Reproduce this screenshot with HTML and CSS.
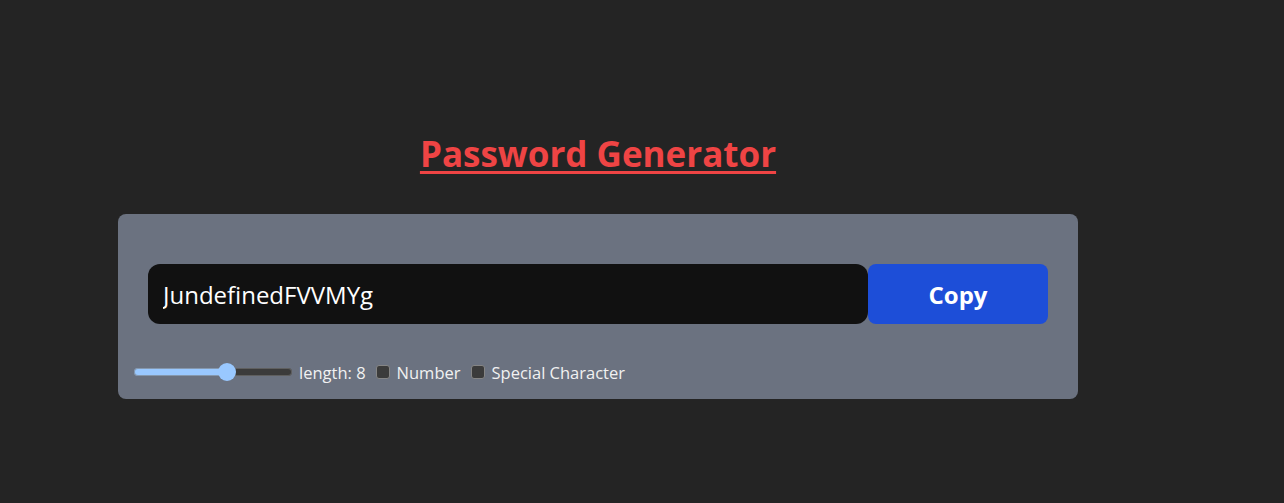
FILE: index.html
```html
<!DOCTYPE html>
<html lang="en">
<head>
<meta charset="utf-8">
<title>Password Generator</title>
<link rel="stylesheet" href="styles.css">
</head>
<body>
<main class="page">
  <h1 class="title">Password Generator</h1>
  <section class="card">
    <div class="field-row">
      <input class="password" type="text" value="JundefinedFVVMYg" readonly>
      <button class="copy" type="button">Copy</button>
    </div>
    <div class="options">
      <input class="range" type="range" min="5" max="10" value="8" style="--fill: 59.5%">
      <label class="opt">length: 8</label>
      <label class="opt"><input type="checkbox" class="check">Number</label>
      <label class="opt"><input type="checkbox" class="check">Special Character</label>
    </div>
  </section>
</main>
</body>
</html>
```

FILE: styles.css
```css
html { color-scheme: dark; }
body {
  margin: 0;
  background: #242424;
  font-family: "Open Sans", "Noto Sans", sans-serif;
  color: rgba(255,255,255,0.87);
}
.page {
  width: 960px;
  margin: 0 auto 0 118px;
  padding-top: 130px;
}
.title {
  margin: 0 0 36px;
  text-align: center;
  color: #ef4444;
  font-size: 35px;
  font-weight: 700;
  line-height: 48px;
  text-decoration: underline;
  text-underline-offset: 4px;
  text-decoration-thickness: 3px;
}
.card {
  background: #6b7280;
  border-radius: 8px;
  padding: 50px 30px 15px 16px;
}
.field-row {
  display: flex;
  margin-left: 14px;
}
.password {
  flex: 1;
  height: 60px;
  box-sizing: border-box;
  border: none;
  outline: none;
  border-radius: 12px;
  background: #111111;
  color: #ffffff;
  font-family: inherit;
  font-size: 24px;
  padding: 0 15px;
}
.copy {
  width: 180px;
  height: 60px;
  border: none;
  border-radius: 8px;
  background: #1d4ed8;
  color: #ffffff;
  font-family: inherit;
  font-size: 24px;
  font-weight: 700;
}
.options {
  display: flex;
  align-items: center;
  gap: 10px;
  margin-top: 36px;
  height: 24px;
  font-size: 16.5px;
  color: #f1f1f1;
}
.range {
  -webkit-appearance: none;
  appearance: none;
  width: 158px;
  height: 8px;
  margin: 0 -3px 0 0;
  border-radius: 4px;
  box-sizing: border-box;
  box-shadow: inset 0 0 0 1px rgba(120,120,120,0.6);
  background: linear-gradient(to right, #99c8ff 0, #99c8ff var(--fill), #3b3b3b var(--fill), #3b3b3b 100%);
}
.range::-webkit-slider-thumb {
  -webkit-appearance: none;
  appearance: none;
  width: 18px;
  height: 18px;
  border-radius: 50%;
  background: #99c8ff;
  border: none;
}
.opt {
  display: flex;
  align-items: center;
}
.check {
  -webkit-appearance: none;
  appearance: none;
  box-sizing: border-box;
  margin: 0 7px 0 0;
  width: 14px;
  height: 14px;
  border: 1px solid #858585;
  border-radius: 3px;
  background: #3b3b3b;
}
```
